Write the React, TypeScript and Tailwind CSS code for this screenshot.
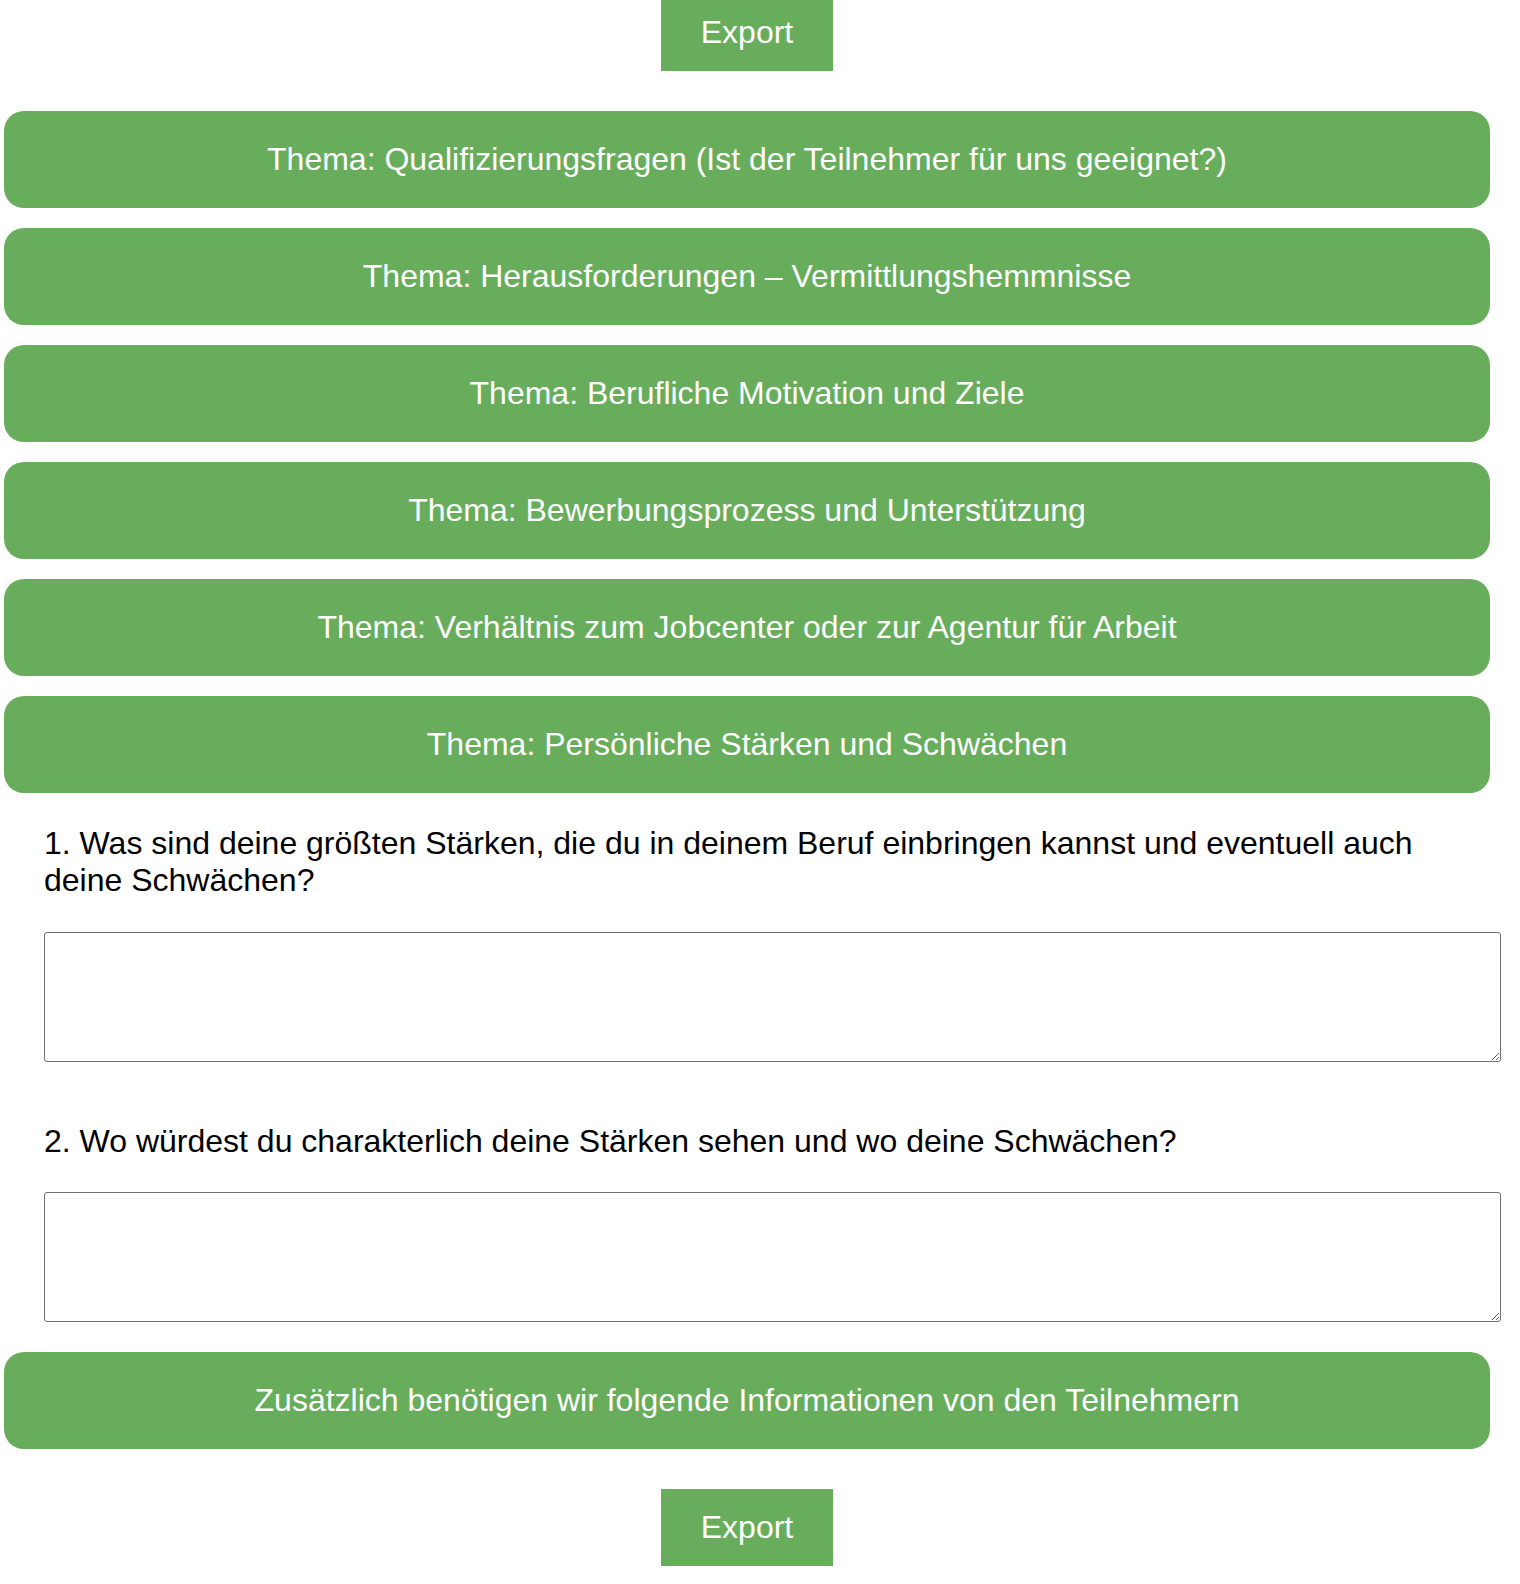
import React from "react";

const topics = [
  "Thema: Qualifizierungsfragen (Ist der Teilnehmer für uns geeignet?)",
  "Thema: Herausforderungen – Vermittlungshemmnisse",
  "Thema: Berufliche Motivation und Ziele",
  "Thema: Bewerbungsprozess und Unterstützung",
  "Thema: Verhältnis zum Jobcenter oder zur Agentur für Arbeit",
  "Thema: Persönliche Stärken und Schwächen",
];

function Bar({ children, className = "" }: { children: React.ReactNode; className?: string }) {
  return (
    <div
      className={
        "flex h-[97px] w-[1486px] items-center justify-center rounded-[20px] bg-[#68ad5c] text-[32px] leading-[37px] text-white " +
        className
      }
    >
      {children}
    </div>
  );
}

export default function App() {
  return (
    <div
      className="flex min-h-[1584px] w-[1520px] flex-col bg-white pl-[4px]"
      style={{ fontFamily: '"Liberation Sans", Arial, sans-serif' }}
    >
      <div className="flex w-[1486px] justify-center">
        <div className="flex h-[71px] w-[172px] items-center justify-center bg-[#68ad5c] pb-[8px] text-[32px] text-white">
          Export
        </div>
      </div>
      <div className="mt-[40px] flex flex-col gap-[20px]">
        {topics.map((t) => (
          <Bar key={t}>{t}</Bar>
        ))}
      </div>
      <div className="flex flex-col pl-[40px]">
        <p className="mt-[32px] w-[1420px] text-[32px] leading-[37px] text-black">
          1. Was sind deine größten Stärken, die du in deinem Beruf einbringen kannst und eventuell auch deine Schwächen?
        </p>
        <textarea className="mt-[33px] h-[130px] w-[1457px] resize rounded-[3px] border border-[#6f6f6f] bg-white" />
        <p className="mt-[61px] text-[32px] leading-[37px] text-black">
          2. Wo würdest du charakterlich deine Stärken sehen und wo deine Schwächen?
        </p>
        <textarea className="mt-[32px] h-[130px] w-[1457px] resize rounded-[3px] border border-[#6f6f6f] bg-white" />
      </div>
      <Bar className="mt-[30px]">Zusätzlich benötigen wir folgende Informationen von den Teilnehmern</Bar>
      <div className="mt-[40px] flex w-[1486px] justify-center">
        <div className="flex h-[77px] w-[172px] items-center justify-center bg-[#68ad5c] pb-[2px] text-[32px] text-white">
          Export
        </div>
      </div>
    </div>
  );
}
